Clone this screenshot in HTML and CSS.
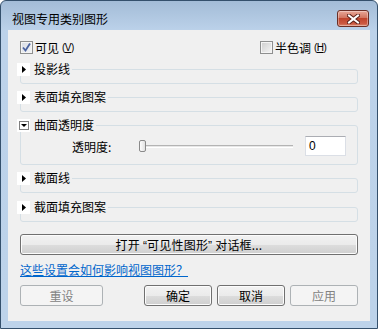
FILE: index.html
```html
<!DOCTYPE html>
<html lang="zh-CN">
  <head>
    <meta charset="UTF-8" />
    <meta name="viewport" content="width=device-width, initial-scale=1.0" />
    <title>视图专用类别图形</title>
    <link rel="stylesheet" href="styles.css">
  </head>

  <body>
    <div class="window">
      <div class="titlebar">
        <span class="title">视图专用类别图形</span>
        <span class="close">
          <svg width="13" height="10" viewBox="0 0 13 10">
            <path d="M2 1.5 L11 8.5 M11 1.5 L2 8.5" stroke="#5a2018" stroke-width="4" stroke-linecap="square" />
            <path d="M2 1.5 L11 8.5 M11 1.5 L2 8.5" stroke="#fff" stroke-width="2" stroke-linecap="square" />
          </svg>
        </span>
      </div>

      <div class="client">
        <div class="checks">
          <label class="check first">
            <span class="box on">
              <svg width="11" height="11" viewBox="0 0 11 11">
                <path d="M2 5.5 L4.5 8.5 L9 1.5" fill="none" stroke="#4b63a0" stroke-width="1.8" />
              </svg>
            </span>
            可见<span class="key">(<u>V</u>)</span>
          </label>
          <label class="check">
            <span class="box"></span>
            半色调<span class="key">(<u>H</u>)</span>
          </label>
        </div>

        <fieldset class="group">
          <legend><span class="toggle"><svg width="13" height="13" viewBox="0 0 13 13"><polygon points="5,3 9,6.5 5,10" fill="#000" /></svg></span>投影线</legend>
        </fieldset>

        <fieldset class="group">
          <legend><span class="toggle"><svg width="13" height="13" viewBox="0 0 13 13"><polygon points="5,3 9,6.5 5,10" fill="#000" /></svg></span>表面填充图案</legend>
        </fieldset>

        <fieldset class="group open">
          <legend><span class="toggle"><svg width="13" height="13" viewBox="0 0 13 13"><rect x="2.5" y="2.5" width="9" height="8" fill="none" stroke="#000" stroke-dasharray="1 1" /><polygon points="4,5 10,5 7,8" fill="#000" /></svg></span>曲面透明度</legend>
          <div class="row">
            <span class="label">透明度:</span>
            <div class="slider">
              <span class="thumb"></span>
              <span class="track"></span>
            </div>
            <div class="field">0</div>
          </div>
        </fieldset>

        <fieldset class="group">
          <legend><span class="toggle"><svg width="13" height="13" viewBox="0 0 13 13"><polygon points="5,3 9,6.5 5,10" fill="#000" /></svg></span>截面线</legend>
        </fieldset>

        <fieldset class="group last">
          <legend><span class="toggle"><svg width="13" height="13" viewBox="0 0 13 13"><polygon points="5,3 9,6.5 5,10" fill="#000" /></svg></span>截面填充图案</legend>
        </fieldset>

        <button class="btn wide">打开 <span class="q">“</span>可见性图形<span class="q">”</span> 对话框...</button>

        <a class="help" href="#">这些设置会如何影响视图图形？</a>

        <div class="buttons">
          <button class="btn reset" disabled>重设</button>
          <button class="btn">确定</button>
          <button class="btn">取消</button>
          <button class="btn" disabled>应用</button>
        </div>
      </div>
    </div>
  </body>
</html>
```

FILE: styles.css
```css
* {
  margin: 0;
  padding: 0;
  box-sizing: border-box;
}

body {
  background: #fff;
  font-family: "Noto Sans CJK SC", "Liberation Sans", sans-serif;
  font-size: 12px;
  color: #000;
}

.window {
  width: 378px;
  height: 329px;
  border: 1px solid #34506c;
  border-radius: 6px 6px 0 0;
  background: linear-gradient(#a3bcd7, #bcd2ea 30px, #bdd3ea);
}

.titlebar {
  height: 29px;
  display: flex;
  justify-content: space-between;
  padding: 0 8px 0 11px;
}

.title {
  line-height: 14px;
  margin-top: 11px;
}

.close {
  width: 32px;
  height: 17px;
  margin-top: 9px;
  border: 1px solid #6a2f26;
  border-radius: 3px;
  background: linear-gradient(#e8a898, #d27560 45%, #c0442c 50%, #cc5a42 85%, #dc8a70);
  box-shadow: inset 0 0 0 1px rgba(255, 255, 255, 0.35);
  display: flex;
  align-items: center;
  justify-content: center;
}

.client {
  margin-left: 7px;
  width: 362px;
  height: 291px;
  background: #f0f0f0;
  padding: 11px 12px 0 12px;
  display: flex;
  flex-direction: column;
}

.checks {
  display: flex;
  height: 13px;
  line-height: 13px;
}

.check {
  display: flex;
  align-items: center;
}

.check.first {
  width: 240px;
}

.box {
  width: 13px;
  height: 13px;
  border: 1px solid #8e8f8f;
  background: linear-gradient(135deg, #cdcdcd, #f6f6f6);
  box-shadow: inset 0 0 0 1px #f4f4f4;
  margin-right: 2px;
  display: flex;
  align-items: center;
  justify-content: center;
}

.box.on {
  background: linear-gradient(135deg, #d6dbe3, #f4f5f7);
}

.key {
  font-family: "Liberation Sans", sans-serif;
  font-size: 10px;
  margin-left: 3px;
  letter-spacing: -0.5px;
}

.group {
  border: 1px solid #d5dfe5;
  border-radius: 3px;
  padding: 0 0 7px;
  margin-top: 6px;
}

.checks + .group {
  margin-top: 8px;
}

.group.last {
  margin-top: 7px;
}

legend {
  margin-left: -4px;
  padding-right: 2px;
  height: 14px;
  line-height: 14px;
  display: flex;
  align-items: center;
}

.toggle {
  width: 13px;
  height: 13px;
  background: #fff;
  margin-right: 4px;
  display: flex;
}

.group.open {
  padding: 4px 0 8px;
}

.row {
  display: flex;
  align-items: center;
  height: 20px;
}

.label {
  margin-left: 51px;
  width: 67px;
}

.slider {
  width: 154px;
  height: 12px;
  display: flex;
  align-items: center;
}

.thumb {
  width: 7px;
  height: 12px;
  border: 1px solid #8a8a8a;
  border-radius: 2px;
  background: linear-gradient(90deg, #fdfdfd, #e2e2e2);
}

.track {
  flex: 1;
  height: 3px;
  border-top: 1px solid #b4b4b4;
  border-bottom: 1px solid #fff;
  background: #e7e7e7;
}

.field {
  width: 41px;
  height: 20px;
  margin-left: 12px;
  background: #fff;
  border: 1px solid #dbdfe6;
  border-top-color: #abadb3;
  padding-left: 3px;
  line-height: 18px;
  font-family: "Liberation Sans", sans-serif;
}

.btn {
  height: 21px;
  font-family: "Noto Sans CJK SC", "Liberation Sans", sans-serif;
  font-size: 12px;
  color: #000;
  border: 1px solid #707070;
  border-radius: 3px;
  background: linear-gradient(#f2f2f2, #ebebeb 50%, #dddddd 51%, #cfcfcf);
  box-shadow: inset 0 0 0 1px #fcfcfc;
}

.btn:disabled {
  color: #838383;
  border-color: #adb2b5;
  background: #f4f4f4;
  box-shadow: none;
}

.wide {
  width: 100%;
  margin-top: 12px;
  letter-spacing: 0.2px;
}

.q {
  font-family: "Liberation Sans", sans-serif;
}

.help {
  margin-top: 8px;
  align-self: flex-start;
  line-height: 14px;
  color: #0066cc;
}

.buttons {
  display: flex;
  gap: 5px;
  margin-top: 8px;
}

.buttons .btn {
  width: 68px;
}

.buttons .reset {
  width: 83px;
  margin-right: auto;
}
```
